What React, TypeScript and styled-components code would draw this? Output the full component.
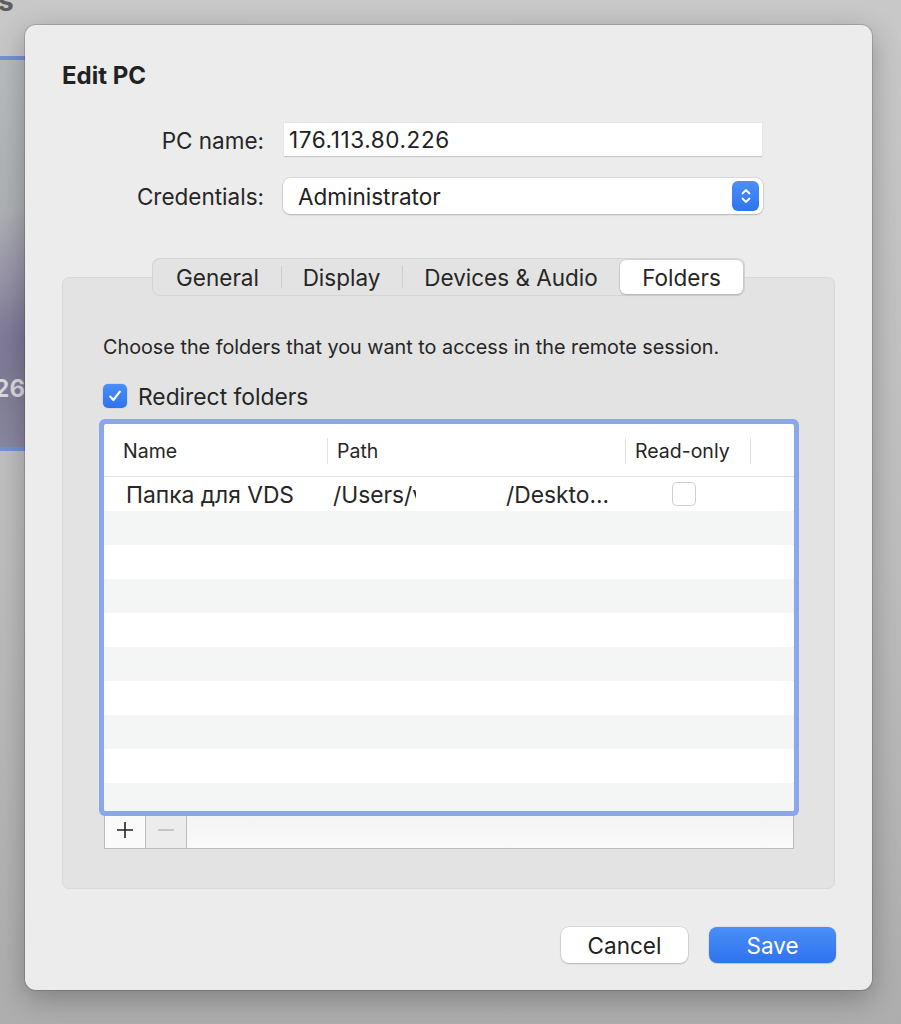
import React from "react";
import styled, { createGlobalStyle } from "styled-components";

const Global = createGlobalStyle`
  html, body { margin: 0; padding: 0; }
  body {
    background: linear-gradient(180deg, #c8c8c8 0%, #bdbdbd 55%, #adadad 100%);
    font-family: Inter, "Noto Sans", "Liberation Sans", sans-serif;
    color: #262626;
  }
  * { box-sizing: border-box; }
`;

const Desktop = styled.div`
  position: relative;
  width: 901px;
  height: 1024px;
  overflow: hidden;
  padding: 25px 29px 0 25px;
`;

const BackWindow = styled.div`
  position: absolute;
  left: -40px;
  top: 56px;
  width: 70px;
  height: 395px;
  border-top: 4px solid #7391d6;
  border-bottom: 4px solid #7391d6;
  background:
    radial-gradient(ellipse 120px 60px at 90% 72%, rgba(120, 115, 150, 0.6), transparent 70%),
    linear-gradient(165deg, #b9bcbe 0%, #aeb1b4 40%, #8f8ba2 62%, #7f7c96 80%, #8a87a0 100%);
  display: flex;
  align-items: flex-end;
  justify-content: flex-end;
  padding: 0 0 44px 0;
`;

const BackText = styled.span`
  font-family: Inter, "Liberation Sans", sans-serif;
  font-weight: 700;
  font-size: 24px;
  color: #d9d9de;
  margin-right: 5px;
`;

const TopGlyph = styled.span`
  position: absolute;
  left: -2px;
  top: -16px;
  font-family: Inter, "Liberation Sans", sans-serif;
  font-weight: 700;
  font-size: 28px;
  color: #5e5e5e;
`;

const Dialog = styled.div`
  position: relative;
  width: 847px;
  height: 965px;
  background: #ececec;
  border-radius: 11px;
  box-shadow: 0 0 0 1px rgba(0, 0, 0, 0.14), 0 8px 28px rgba(0, 0, 0, 0.28);
  padding: 39px 37px 27px 37px;
  display: flex;
  flex-direction: column;
`;

const Title = styled.h1`
  margin: 0;
  font-size: 24px;
  line-height: 24px;
  font-weight: 700;
  color: #222;
`;

const Form = styled.div`
  margin-top: 35px;
  display: grid;
  grid-template-columns: 202px 478px;
  grid-template-rows: 34px 36px;
  column-gap: 20px;
  row-gap: 21px;
  align-items: center;
`;

const Label = styled.div`
  text-align: right;
  font-size: 22.5px;
  color: #262626;
`;

const TextField = styled.div`
  height: 34px;
  background: #fff;
  border-bottom: 1px solid #c9c9c9;
  box-shadow: 0 0 0 0.5px rgba(0, 0, 0, 0.06);
  display: flex;
  align-items: center;
  padding-left: 5px;
  font-size: 22.5px;
  letter-spacing: 0.6px;
  color: #222;
`;

const Popup = styled.div`
  height: 36px;
  margin-left: -1px;
  margin-right: -1px;
  background: #fff;
  border-radius: 7px;
  box-shadow: 0 0 0 0.5px rgba(0, 0, 0, 0.14), 0 1px 2px rgba(0, 0, 0, 0.18);
  display: flex;
  align-items: center;
  justify-content: space-between;
  padding: 0 4px 0 15px;
  font-size: 22.5px;
  color: #222;
`;

const Stepper = styled.div`
  width: 27px;
  height: 30px;
  border-radius: 6px;
  background: linear-gradient(180deg, #4b8ff8 0%, #2f73ef 100%);
  display: flex;
  align-items: center;
  justify-content: center;
`;

const Tabs = styled.div`
  margin-top: 44px;
  display: flex;
  flex-direction: column;
  align-items: center;
`;

const Segmented = styled.div`
  position: relative;
  z-index: 1;
  height: 38px;
  display: flex;
  align-items: stretch;
  padding: 2px;
  background: #e3e3e3;
  border-radius: 8px;
  box-shadow: inset 0 0 0 1px #d4d4d4;
`;

const Segment = styled.div<{ $w: number; $active?: boolean }>`
  width: ${(p) => p.$w}px;
  display: flex;
  align-items: center;
  justify-content: center;
  font-size: 22.5px;
  color: #262626;
  border-radius: 6px;
  background: ${(p) => (p.$active ? "#fff" : "transparent")};
  box-shadow: ${(p) =>
    p.$active ? "0 0 0 0.5px rgba(0,0,0,0.12), 0 1px 2px rgba(0,0,0,0.18)" : "none"};
`;

const SegDivider = styled.div`
  width: 1px;
  align-self: center;
  height: 22px;
  background: #cdcdcd;
  margin: 0 -0.5px;
`;

const TabBox = styled.div`
  align-self: stretch;
  margin-top: -19px;
  height: 612px;
  background: #e3e3e3;
  border: 1px solid #d9d9d9;
  border-radius: 7px;
  padding: 58px 40px 39px 41px;
  display: flex;
  flex-direction: column;
`;

const Description = styled.p`
  margin: 0 0 0 -1px;
  font-size: 19.8px;
  line-height: 22px;
  color: #262626;
`;

const CheckRow = styled.label`
  margin: 25px 0 0 -1px;
  height: 26px;
  display: flex;
  align-items: center;
  gap: 11px;
  font-size: 22.8px;
  color: #262626;
`;

const CheckBox = styled.span<{ $checked?: boolean }>`
  width: 24px;
  height: 24px;
  border-radius: 5px;
  display: inline-flex;
  align-items: center;
  justify-content: center;
  background: ${(p) => (p.$checked ? "linear-gradient(180deg,#4a8ef8,#2e74ef)" : "#fff")};
  box-shadow: ${(p) =>
    p.$checked
      ? "0 0 0 0.5px rgba(0,0,0,0.1)"
      : "inset 0 0 0 1px #cfcfcf, 0 0.5px 1px rgba(0,0,0,0.06)"};
`;

const TableFrame = styled.div`
  margin-top: 15px;
  height: 387px;
  background: #fff;
  border-radius: 2px;
  box-shadow: 0 0 0 5px #8aa7ec;
  overflow: hidden;
  position: relative;
  z-index: 1;
  display: flex;
  flex-direction: column;
`;

const COLS = "223px 298px 125px 1fr";

const HeaderRow = styled.div`
  flex: none;
  height: 53px;
  display: grid;
  grid-template-columns: ${COLS};
  align-items: center;
  border-bottom: 1px solid #e3e3e3;
  padding-top: 2px;
`;

const HeaderCell = styled.div<{ $pad: number; $sep?: boolean }>`
  height: 26px;
  display: flex;
  align-items: center;
  padding-left: ${(p) => p.$pad}px;
  font-size: 19.5px;
  color: #262626;
  border-left: ${(p) => (p.$sep ? "1px solid #e0e0e0" : "none")};
`;

const Row = styled.div<{ $alt?: boolean }>`
  flex: none;
  height: 34px;
  display: grid;
  grid-template-columns: ${COLS};
  align-items: center;
  background: ${(p) => (p.$alt ? "#f4f5f5" : "#fff")};
`;

const Cell = styled.div<{ $pad: number; $center?: boolean }>`
  display: flex;
  align-items: center;
  justify-content: ${(p) => (p.$center ? "center" : "flex-start")};
  padding-left: ${(p) => p.$pad}px;
  font-size: 22.8px;
  color: #262626;
  white-space: nowrap;
  overflow: hidden;
`;

const Clip = styled.span<{ $w: number }>`
  display: inline-block;
  width: ${(p) => p.$w}px;
  overflow: hidden;
  white-space: nowrap;
`;

const PathTail = styled.span`
  margin-left: 90px;
`;

const BottomBar = styled.div`
  height: 38px;
  display: flex;
  border: 1px solid #bdbdbd;
  border-top: none;
  background: linear-gradient(180deg, #f3f3f3, #fafafa);
`;

const BarButton = styled.div<{ $disabled?: boolean }>`
  width: 41px;
  display: flex;
  align-items: center;
  justify-content: center;
  border-right: 1px solid #bdbdbd;
  background: ${(p) => (p.$disabled ? "#ececec" : "#fafafa")};
`;

const Footer = styled.div`
  margin-top: 38px;
  margin-right: -1px;
  display: flex;
  justify-content: flex-end;
  gap: 21px;
`;

const Button = styled.button<{ $primary?: boolean }>`
  width: 127px;
  height: 36px;
  border: none;
  border-radius: 8px;
  font-family: inherit;
  font-size: 22.5px;
  color: ${(p) => (p.$primary ? "#fff" : "#222")};
  background: ${(p) =>
    p.$primary ? "linear-gradient(180deg, #4a8ef8 0%, #2f73ef 100%)" : "#fff"};
  box-shadow: ${(p) =>
    p.$primary
      ? "0 0 0 0.5px rgba(0,0,0,0.1), 0 1px 1px rgba(0,0,0,0.12)"
      : "0 0 0 0.5px rgba(0,0,0,0.14), 0 1px 2px rgba(0,0,0,0.18)"};
`;

const tabs = [
  { label: "General", w: 127 },
  { label: "Display", w: 121 },
  { label: "Devices & Audio", w: 218 },
  { label: "Folders", w: 123, active: true },
];

export default function App() {
  const emptyRows = Array.from({ length: 9 }, (_, i) => i);
  return (
    <>
      <Global />
      <Desktop>
        <TopGlyph>s</TopGlyph>
        <BackWindow>
          <BackText>26</BackText>
        </BackWindow>
        <Dialog>
          <Title>Edit PC</Title>
          <Form>
            <Label>PC name:</Label>
            <TextField>176.113.80.226</TextField>
            <Label>Credentials:</Label>
            <Popup>
              <span>Administrator</span>
              <Stepper>
                <svg width="12" height="20" viewBox="0 0 12 20" fill="none">
                  <path d="M2.5 7.5 L6 4 L9.5 7.5" stroke="#fff" strokeWidth="1.8" strokeLinecap="round" strokeLinejoin="round" />
                  <path d="M2.5 12.5 L6 16 L9.5 12.5" stroke="#fff" strokeWidth="1.8" strokeLinecap="round" strokeLinejoin="round" />
                </svg>
              </Stepper>
            </Popup>
          </Form>
          <Tabs>
            <Segmented>
              {tabs.map((t, i) => {
                const prev = tabs[i - 1];
                const showDiv = i > 0 && !t.active && !(prev && prev.active);
                return (
                  <React.Fragment key={t.label}>
                    {showDiv && <SegDivider />}
                    <Segment $w={t.w} $active={t.active}>
                      {t.label}
                    </Segment>
                  </React.Fragment>
                );
              })}
            </Segmented>
            <TabBox>
              <Description>Choose the folders that you want to access in the remote session.</Description>
              <CheckRow>
                <CheckBox $checked>
                  <svg width="16" height="16" viewBox="0 0 16 16" fill="none">
                    <path d="M3.2 8.6 L6.4 12 L12.8 3.6" stroke="#fff" strokeWidth="2.2" strokeLinecap="round" strokeLinejoin="round" />
                  </svg>
                </CheckBox>
                <span>Redirect folders</span>
              </CheckRow>
              <TableFrame>
                <HeaderRow>
                  <HeaderCell $pad={19}>Name</HeaderCell>
                  <HeaderCell $pad={9} $sep>Path</HeaderCell>
                  <HeaderCell $pad={9} $sep>Read-only</HeaderCell>
                  <HeaderCell $pad={0} $sep />
                </HeaderRow>
                <Row>
                  <Cell $pad={22}>Папка для VDS</Cell>
                  <Cell $pad={6}>
                    <Clip $w={83}>/Users/v</Clip>
                    <PathTail>/Deskto...</PathTail>
                  </Cell>
                  <Cell $pad={0} $center>
                    <CheckBox style={{ marginRight: 7 }} />
                  </Cell>
                  <Cell $pad={0} />
                </Row>
                {emptyRows.map((i) => (
                  <Row key={i} $alt={i % 2 === 0} />
                ))}
              </TableFrame>
              <BottomBar>
                <BarButton>
                  <svg width="20" height="20" viewBox="0 0 20 20">
                    <path d="M10 2 V18 M2 10 H18" stroke="#222" strokeWidth="1.6" />
                  </svg>
                </BarButton>
                <BarButton $disabled>
                  <svg width="20" height="20" viewBox="0 0 20 20">
                    <path d="M2 10 H18" stroke="#bcbcbc" strokeWidth="1.6" />
                  </svg>
                </BarButton>
              </BottomBar>
            </TabBox>
          </Tabs>
          <Footer>
            <Button>Cancel</Button>
            <Button $primary>Save</Button>
          </Footer>
        </Dialog>
      </Desktop>
    </>
  );
}
